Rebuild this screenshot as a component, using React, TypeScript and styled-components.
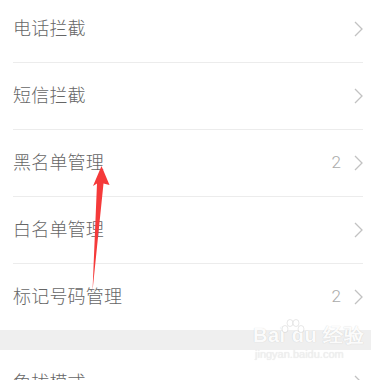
import styled, { createGlobalStyle } from "styled-components";

const Global = createGlobalStyle`
	html, body {
		margin: 0;
		padding: 0;
		background: #fff;
	}
	body {
		font-family: "Noto Sans CJK SC", "Noto Sans", sans-serif;
		overflow: hidden;
	}
`;

const Page = styled.div`
	position: relative;
	width: 371px;
	height: 380px;
	overflow: hidden;
	background: #fff;
`;

const List = styled.div`
	display: flex;
	flex-direction: column;
	margin-top: -4px;
`;

const Row = styled.div<{ $last?: boolean }>`
	height: 66px;
	margin: 0 8px 0 13px;
	display: flex;
	align-items: center;
	border-bottom: ${(p) => (p.$last ? "none" : "1px solid #ececec")};
`;

const Label = styled.div`
	flex: 1;
	font-size: 18px;
	font-weight: 300;
	color: #666;
	letter-spacing: 0.2px;
	padding-bottom: 4px;
`;

const Count = styled.span`
	font-family: "Roboto", "Noto Sans", sans-serif;
	font-size: 17px;
	font-weight: 300;
	color: #aaa;
	margin-right: 13px;
	padding-bottom: 2px;
`;

const Section = styled.div`
	height: 20px;
	background: #efefef;
`;

const Overlay = styled.svg`
	position: absolute;
	left: 0;
	top: 0;
	pointer-events: none;
`;

const Watermark = styled.div`
	position: absolute;
	left: 253px;
	top: 323px;
	display: flex;
	flex-direction: column;
	align-items: flex-start;
	color: rgba(255, 255, 255, 0.95);
	text-shadow: 0 0 1px rgba(0, 0, 0, 0.18);
`;

const Paw = styled.svg`
	position: absolute;
	left: 27px;
	top: -4px;
`;

const MarkTitle = styled.div`
	font-family: "Liberation Sans", sans-serif;
	font-size: 20px;
	font-weight: 700;
	line-height: 24px;
	letter-spacing: 0.5px;
`;

const MarkUrl = styled.div`
	font-family: "Liberation Sans", sans-serif;
	font-size: 11px;
	line-height: 14px;
	color: rgba(240, 240, 240, 0.95);
	text-shadow: 0 0 1px rgba(0, 0, 0, 0.12);
	margin-left: 2px;
`;

function Chevron() {
	return (
		<svg width="9" height="16" viewBox="0 0 9 16">
			<polyline points="1,1 8,8 1,15" fill="none" stroke="#c2c2c2" strokeWidth="1.3" />
		</svg>
	);
}

const rows = [
	{ label: "电话拦截" },
	{ label: "短信拦截" },
	{ label: "黑名单管理", count: 2 },
	{ label: "白名单管理" },
	{ label: "标记号码管理", count: 2 },
];

export default function App() {
	return (
		<Page>
			<Global />
			<List>
				{rows.map((r, i) => (
					<Row key={r.label} $last={i === rows.length - 1}>
						<Label>{r.label}</Label>
						{r.count !== undefined && <Count>{r.count}</Count>}
						<Chevron />
					</Row>
				))}
				<Section />
				<Row>
					<Label>免扰模式</Label>
					<Chevron />
				</Row>
			</List>
			<Watermark>
				<Paw width="26" height="16" viewBox="0 0 26 16">
					<g fill="none" stroke="rgba(0,0,0,0.12)" strokeWidth="0.8">
						<ellipse cx="5" cy="10" rx="3" ry="3.5" fill="#fff" />
						<ellipse cx="10" cy="4" rx="3" ry="3.5" fill="#fff" />
						<ellipse cx="16" cy="4" rx="3" ry="3.5" fill="#fff" />
						<ellipse cx="21" cy="10" rx="3" ry="3.5" fill="#fff" />
					</g>
				</Paw>
				<MarkTitle>Bai du 经验</MarkTitle>
				<MarkUrl>jingyan.baidu.com</MarkUrl>
			</Watermark>
			<Overlay width="371" height="380" viewBox="0 0 371 380">
				<polygon
					points="101.5,166 109.5,185 103.5,183.5 92.5,291 97,183.5 93,186"
					fill="#f53a3a"
				/>
			</Overlay>
		</Page>
	);
}
